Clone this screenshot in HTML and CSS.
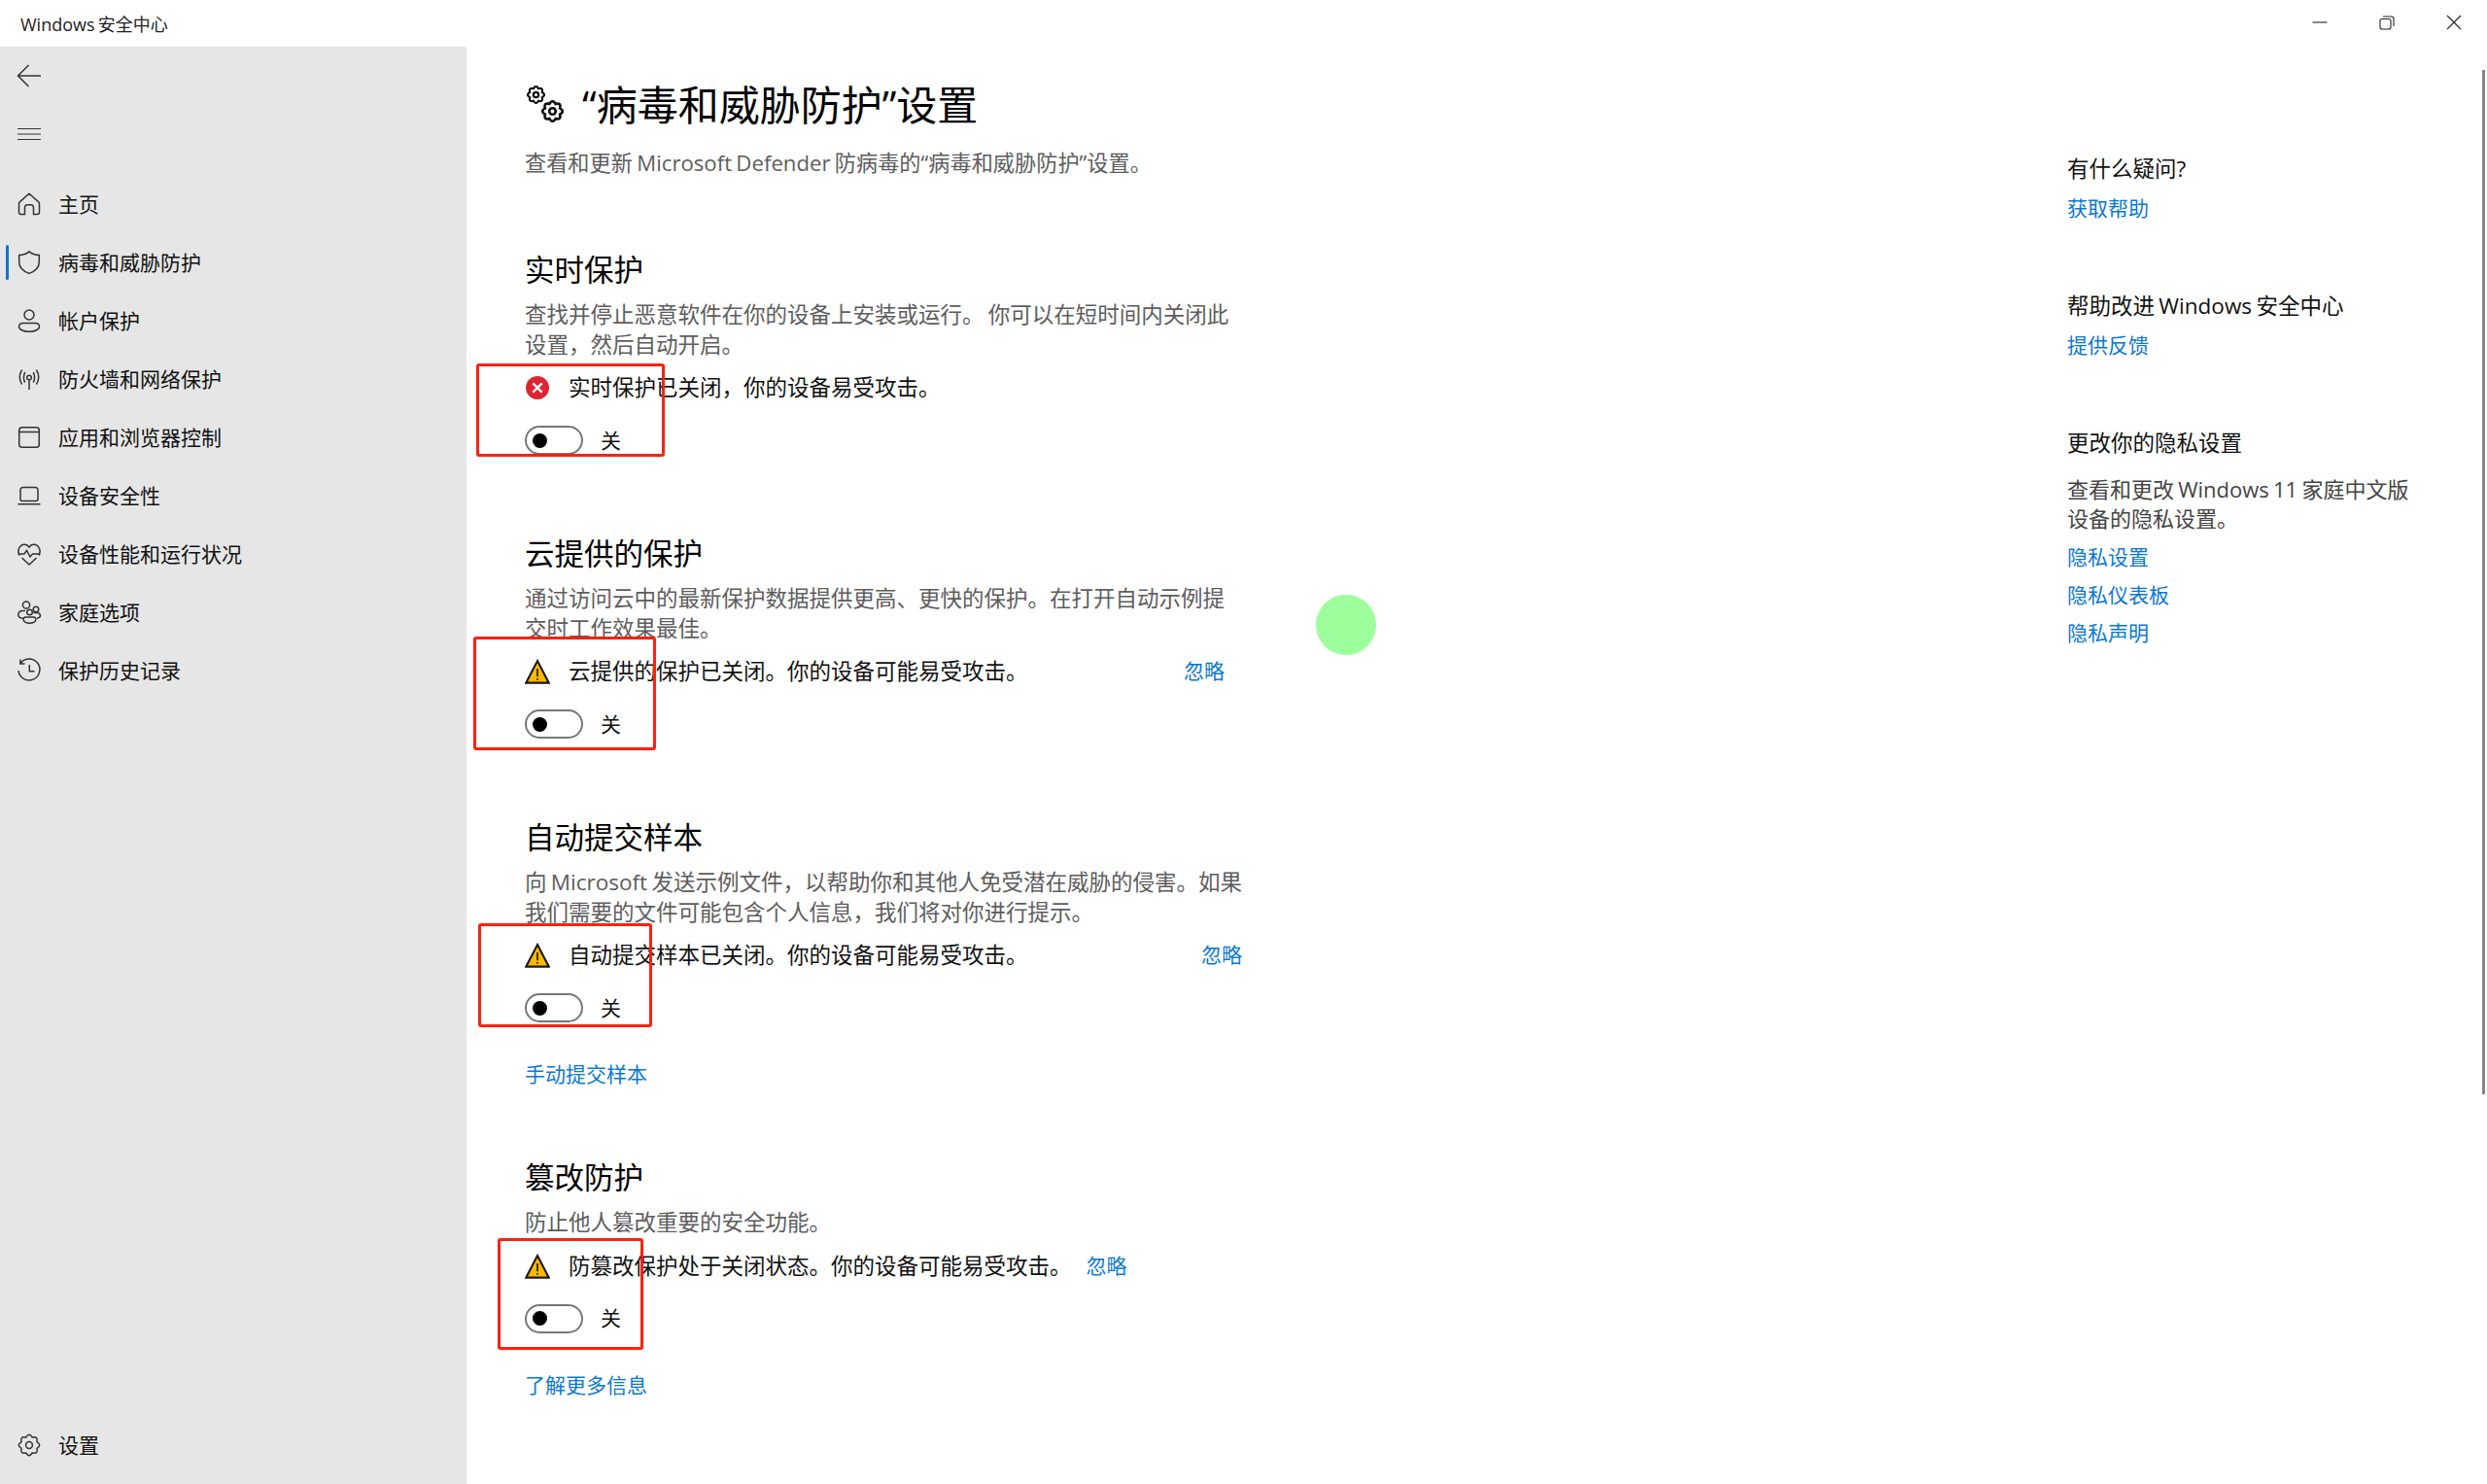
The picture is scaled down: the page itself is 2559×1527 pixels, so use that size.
FILE: index.html
```html
<!DOCTYPE html>
<html lang="zh-CN">

<head>
    <meta charset="UTF-8">
    <meta name="viewport" content="width=device-width, initial-scale=1.0">
    <title>Windows 安全中心</title>
    <link rel="stylesheet" href="styles.css">
</head>

<body>
    <!-- shared icon shapes -->
    <svg class="icon-defs" aria-hidden="true">
        <symbol id="gear" viewBox="0 0 24 24">
            <path d="M19.95 15.29Q21.55 21.55 15.29 19.95Q12 25.5 8.71 19.95Q2.45 21.55 4.05 15.29Q-1.5 12 4.05 8.71Q2.45 2.45 8.71 4.05Q12 -1.5 15.29 4.05Q21.55 2.45 19.95 8.71Q25.5 12 19.95 15.29Z" />
            <circle cx="12" cy="12" r="3.4" />
        </symbol>
        <symbol id="warning" viewBox="0 0 25 25">
            <path class="warning-fill" d="M12.5 2L23.8 23.7H1.2Z" />
            <path class="warning-mark" d="M12.5 9.5V17.5M12.5 19.2V21" />
        </symbol>
    </svg>

    <div class="window">
        <header class="titlebar">
            <span class="app-name">Windows 安全中心</span>
            <div class="window-controls">
                <span class="window-btn">
                    <svg viewBox="0 0 16 16"><path d="M0.5 8H15.5" /></svg>
                </span>
                <span class="window-btn">
                    <svg viewBox="0 0 16 16"><path d="M1 6.5A2 2 0 0 1 3 4.5H10A2 2 0 0 1 12 6.5V13A2 2 0 0 1 10 15H3A2 2 0 0 1 1 13ZM4 2H12.5A2.5 2.5 0 0 1 15 4.5V12" /></svg>
                </span>
                <span class="window-btn">
                    <svg viewBox="0 0 16 16"><path d="M1 1L15 15M15 1L1 15" /></svg>
                </span>
            </div>
        </header>

        <div class="layout">
            <nav class="sidebar">
                <div class="side-tool">
                    <svg class="nav-icon" viewBox="0 0 24 24"><path d="M0.5 12H24M11.5 1L0.5 12L11.5 23" /></svg>
                </div>
                <div class="side-tool">
                    <svg class="nav-icon thin" viewBox="0 0 24 24"><path d="M0 6.5H24M0 12H24M0 17.5H24" /></svg>
                </div>

                <ul class="nav-list">
                    <li class="nav-item">
                        <svg class="nav-icon" viewBox="0 0 24 24"><path d="M12 1.2L21.5 9.6A2 2 0 0 1 22.5 11.5V20.5A2 2 0 0 1 20.5 22.5H16.5V15.5A3 3 0 0 0 13.5 12.8H10.5A3 3 0 0 0 7.5 15.5V22.5H3.5A2 2 0 0 1 1.5 20.5V11.5A2 2 0 0 1 2.5 9.6Z" /></svg>
                        <span>主页</span>
                    </li>
                    <li class="nav-item active">
                        <svg class="nav-icon" viewBox="0 0 24 24"><path d="M12 0.8C15 3.3 18.5 4.4 22.3 4.5V11.5C22.3 17 18.5 21 12 23.4C5.5 21 1.7 17 1.7 11.5V4.5C5.5 4.4 9 3.3 12 0.8Z" /></svg>
                        <span>病毒和威胁防护</span>
                    </li>
                    <li class="nav-item">
                        <svg class="nav-icon" viewBox="0 0 24 24"><circle cx="12" cy="6" r="5" /><path d="M5.5 14.5H18.5A4 4 0 0 1 22.5 18C22.5 21 18 23.2 12 23.2C6 23.2 1.5 21 1.5 18A4 4 0 0 1 5.5 14.5Z" /></svg>
                        <span>帐户保护</span>
                    </li>
                    <li class="nav-item">
                        <svg class="nav-icon" viewBox="0 0 24 24"><circle cx="12" cy="10.5" r="2.3" /><path d="M12 12.8V23M4.6 2.5C1.8 7 1.8 13 4.6 17.5M19.4 2.5C22.2 7 22.2 13 19.4 17.5M7.8 5C6 8 6 13 7.8 15.5M16.2 5C18 8 18 13 16.2 15.5" /></svg>
                        <span>防火墙和网络保护</span>
                    </li>
                    <li class="nav-item">
                        <svg class="nav-icon" viewBox="0 0 24 24"><rect x="1.7" y="1.7" width="20.6" height="20.6" rx="3" /><path d="M1.7 6.5H22.3" /></svg>
                        <span>应用和浏览器控制</span>
                    </li>
                    <li class="nav-item">
                        <svg class="nav-icon" viewBox="0 0 24 24"><path d="M5 17.5A2 2 0 0 1 3 15.5V6A2.5 2.5 0 0 1 5.5 3.5H18.5A2.5 2.5 0 0 1 21 6V15.5A2 2 0 0 1 19 17.5ZM0.5 20.7H23.5" /></svg>
                        <span>设备安全性</span>
                    </li>
                    <li class="nav-item">
                        <svg class="nav-icon" viewBox="0 0 24 24"><path d="M2.2 13.5C-1 8 2.5 2 7.5 2.3C9.5 2.4 11 3.5 12 5C13 3.5 14.5 2.4 16.5 2.3C21.5 2 25 8 21.8 13.5M0.5 12H7L9.5 8.5L13 15L15.5 12H23.5M4.5 16L12 23L19.5 16" /></svg>
                        <span>设备性能和运行状况</span>
                    </li>
                    <li class="nav-item">
                        <svg class="nav-icon" viewBox="0 0 24 24"><circle cx="9" cy="4.5" r="3.6" /><circle cx="19" cy="9" r="2.8" /><circle cx="12.5" cy="12" r="2.8" /><path d="M8 10.5H5A4 4 0 0 0 0.8 14.5C0.8 16.5 2.5 18 5.5 18.3M16.5 12.5H20A3.5 3.5 0 0 1 23.5 15.5C23.5 17 22 18 20 18.3M8.5 17H16.5A2.5 2.5 0 0 1 19 19.3C19 21.5 16 23.3 12.5 23.3C9 23.3 6 21.5 6 19.3A2.5 2.5 0 0 1 8.5 17Z" /></svg>
                        <span>家庭选项</span>
                    </li>
                    <li class="nav-item">
                        <svg class="nav-icon" viewBox="0 0 24 24"><path d="M3.2 4.2A11 11 0 1 1 1 12M2.8 0.5V5H7.5M12.3 6V12.8H17.5" /></svg>
                        <span>保护历史记录</span>
                    </li>
                </ul>

                <div class="nav-item nav-bottom">
                    <svg class="nav-icon gear-icon"><use href="#gear" /></svg>
                    <span>设置</span>
                </div>
            </nav>

            <main class="content">
                <div class="settings">
                    <h1 class="page-title">
                        <svg class="title-icon" viewBox="0 0 40 40">
                            <use href="#gear" x="2" y="0" width="19" height="19" />
                            <use href="#gear" x="17" y="15" width="23" height="23" />
                        </svg>
                        <span>“病毒和威胁防护”设置</span>
                    </h1>
                    <p class="page-intro">查看和更新 Microsoft Defender 防病毒的“病毒和威胁防护”设置。</p>

                    <section class="setting first">
                        <h2>实时保护</h2>
                        <p class="desc">查找并停止恶意软件在你的设备上安装或运行。 你可以在短时间内关闭此<br>设置，然后自动开启。</p>
                        <div class="alert">
                            <svg class="alert-icon" viewBox="0 0 25 25">
                                <circle class="error-disc" cx="12.5" cy="12.5" r="11.5" />
                                <path class="error-cross" d="M8 8L17 17M17 8L8 17" />
                            </svg>
                            <span class="alert-text">实时保护已关闭，你的设备易受攻击。</span>
                        </div>
                        <div class="switch-row"><span class="switch"></span><span class="switch-label">关</span></div>
                    </section>

                    <section class="setting">
                        <h2>云提供的保护</h2>
                        <p class="desc">通过访问云中的最新保护数据提供更高、更快的保护。在打开自动示例提<br>交时工作效果最佳。</p>
                        <div class="alert">
                            <svg class="alert-icon"><use href="#warning" /></svg>
                            <span class="alert-text">云提供的保护已关闭。你的设备可能易受攻击。</span>
                            <a class="link dismiss" href="#">忽略</a>
                        </div>
                        <div class="switch-row"><span class="switch"></span><span class="switch-label">关</span></div>
                    </section>

                    <section class="setting">
                        <h2>自动提交样本</h2>
                        <p class="desc">向 Microsoft 发送示例文件，以帮助你和其他人免受潜在威胁的侵害。如果<br>我们需要的文件可能包含个人信息，我们将对你进行提示。</p>
                        <div class="alert">
                            <svg class="alert-icon"><use href="#warning" /></svg>
                            <span class="alert-text">自动提交样本已关闭。你的设备可能易受攻击。</span>
                            <a class="link dismiss" href="#">忽略</a>
                        </div>
                        <div class="switch-row"><span class="switch"></span><span class="switch-label">关</span></div>
                        <a class="link more" href="#">手动提交样本</a>
                    </section>

                    <section class="setting">
                        <h2>篡改防护</h2>
                        <p class="desc">防止他人篡改重要的安全功能。</p>
                        <div class="alert">
                            <svg class="alert-icon"><use href="#warning" /></svg>
                            <span class="alert-text">防篡改保护处于关闭状态。你的设备可能易受攻击。</span>
                            <a class="link dismiss" href="#">忽略</a>
                        </div>
                        <div class="switch-row"><span class="switch"></span><span class="switch-label">关</span></div>
                        <a class="link more" href="#">了解更多信息</a>
                    </section>
                </div>

                <aside class="help">
                    <h3>有什么疑问?</h3>
                    <a class="link" href="#">获取帮助</a>
                    <h3>帮助改进 Windows 安全中心</h3>
                    <a class="link" href="#">提供反馈</a>
                    <h3>更改你的隐私设置</h3>
                    <p class="help-text">查看和更改 Windows 11 家庭中文版<br>设备的隐私设置。</p>
                    <a class="link" href="#">隐私设置</a>
                    <a class="link" href="#">隐私仪表板</a>
                    <a class="link" href="#">隐私声明</a>
                </aside>
            </main>
        </div>

        <!-- things lying over the app: scrollbar, cursor spot, red annotation boxes -->
        <div class="scroll-thumb"></div>
        <div class="cursor-spot"></div>
        <div class="mark mark-realtime"></div>
        <div class="mark mark-cloud"></div>
        <div class="mark mark-sample"></div>
        <div class="mark mark-tamper"></div>
    </div>
</body>

</html>
```

FILE: styles.css
```css
:root {
    --sidebar-bg: #e6e6e6;
    --text-main: #111111;
    --text-muted: #5d5d5d;
    --link: #0a78d2;
    --icon-line: #333333;
}

html,
body {
    margin: 0;
    height: 100%;
}

body {
    font-family: "Open Sans", "Noto Sans CJK SC", sans-serif;
    color: var(--text-main);
    background-color: #ffffff;
    overflow: hidden;
    word-spacing: -1.5px;
}

.icon-defs {
    display: none;
}

.window {
    position: relative;
    display: flex;
    flex-direction: column;
    height: 100vh;
}

/* Title bar */
.titlebar {
    display: flex;
    align-items: center;
    justify-content: space-between;
    flex: 0 0 48px;
    padding-left: 21px;
}

.app-name {
    font-size: 18px;
    color: #222222;
}

.window-controls {
    display: flex;
    align-items: center;
    margin-bottom: 2px;
}

.window-btn {
    display: flex;
    align-items: center;
    justify-content: center;
    width: 69px;
}

.window-btn svg {
    width: 16px;
    height: 16px;
    fill: none;
    stroke: #222222;
    stroke-width: 1.1;
}

.layout {
    display: flex;
    flex: 1;
    min-height: 0;
}

/* Sidebar */
.sidebar {
    display: flex;
    flex-direction: column;
    flex: 0 0 480px;
    background-color: var(--sidebar-bg);
    font-size: 21px;
}

.side-tool {
    display: flex;
    align-items: center;
    height: 60px;
    padding-left: 18px;
}

.nav-icon {
    flex: 0 0 24px;
    width: 24px;
    height: 24px;
    fill: none;
    stroke: var(--icon-line);
    stroke-width: 1.5;
    overflow: visible;
}

.nav-icon.thin {
    stroke-width: 1.1;
}

.nav-list {
    list-style: none;
    margin: 12px 0 0;
    padding: 0;
}

.nav-item {
    position: relative;
    display: flex;
    align-items: center;
    gap: 18px;
    height: 60px;
    padding-left: 18px;
    line-height: 30px;
}

.nav-item.active::before {
    content: "";
    position: absolute;
    left: 6px;
    top: 12px;
    width: 3px;
    height: 36px;
    border-radius: 2px;
    background-color: #0078d7;
}

.nav-bottom {
    margin-top: auto;
    margin-bottom: 10px;
}

/* Main column */
.content {
    display: flex;
    flex: 1;
    padding: 32px 0 0 60px;
}

.settings {
    flex: 0 0 1587px;
}

.page-title {
    display: flex;
    align-items: center;
    gap: 19px;
    margin: 0;
    height: 56px;
    font-size: 42px;
    font-weight: 400;
    line-height: 56px;
    color: #000000;
}

.title-icon {
    width: 40px;
    height: 40px;
    fill: none;
    stroke: #111111;
    stroke-width: 2.8;
    overflow: visible;
}

.page-intro {
    margin: 17px 0 0;
    font-size: 22.2px;
    line-height: 30px;
    color: var(--text-muted);
}

.setting {
    width: fit-content;
    margin-top: 81px;
}

.setting.first {
    margin-top: 74px;
}

.setting h2 {
    margin: 0;
    font-size: 30.5px;
    font-weight: 400;
    line-height: 40px;
    color: #000000;
}

.desc {
    margin: 12px 0 0;
    font-size: 22.5px;
    line-height: 30.5px;
    color: var(--text-muted);
}

.alert {
    display: flex;
    align-items: center;
    justify-content: space-between;
    gap: 15px;
    margin-top: 14px;
    height: 30px;
    font-size: 22.5px;
    line-height: 30px;
}

.alert-icon {
    flex: 0 0 26px;
    width: 26px;
    height: 26px;
    margin-right: 4px;
}

.alert-text {
    flex: 1;
    color: #111111;
}

.error-disc {
    fill: #dc2433;
}

.error-cross {
    fill: none;
    stroke: #ffffff;
    stroke-width: 2.2;
}

.warning-fill {
    fill: #ffb900;
    stroke: #1a1a1a;
    stroke-width: 2;
    stroke-linejoin: miter;
}

.warning-mark {
    fill: none;
    stroke: #1a1a1a;
    stroke-width: 1.6;
}

.switch-row {
    display: flex;
    align-items: center;
    gap: 18px;
    margin-top: 24px;
    height: 30px;
    font-size: 21px;
}

.switch-label {
    padding-bottom: 3px;
}

.switch {
    position: relative;
    box-sizing: border-box;
    width: 60px;
    height: 30px;
    border: 2px solid #777777;
    border-radius: 15px;
}

.switch::after {
    content: "";
    position: absolute;
    left: 6px;
    top: 5.5px;
    width: 15px;
    height: 15px;
    border-radius: 50%;
    background-color: #000000;
}

.link {
    display: block;
    font-size: 21px;
    line-height: 30px;
    color: var(--link);
    text-decoration: none;
}

.dismiss {
    flex: 0 0 auto;
    margin-top: -2px;
}

.more {
    margin-top: 29px;
    line-height: 48px;
    margin-bottom: -19px;
}

/* Right help column */
.help {
    flex: 0 0 300px;
    padding-top: 79px;
}

.help h3 {
    margin: 71px 0 0;
    font-size: 22.5px;
    font-weight: 400;
    line-height: 30px;
    color: #111111;
}

.help h3:first-child {
    margin-top: 0;
}

.help h3 + .link {
    margin-top: 10px;
}

.help-text {
    margin: 17px 0 0;
    font-size: 22px;
    line-height: 30px;
    color: #444444;
    white-space: nowrap;
}

.help .help-text + .link {
    margin-top: 10px;
}

.help .link + .link {
    margin-top: 9px;
}

/* Overlays */
.scroll-thumb {
    position: absolute;
    right: 2px;
    top: 72px;
    width: 3px;
    height: 1054px;
    background-color: #858585;
}

.cursor-spot {
    position: absolute;
    left: 1354px;
    top: 612px;
    width: 62px;
    height: 62px;
    border-radius: 50%;
    background-color: #9cff9c;
}

.mark {
    position: absolute;
    box-sizing: border-box;
    border: 3px solid #ff2010;
    border-radius: 3px;
}

.mark-realtime {
    left: 490px;
    top: 374px;
    width: 194px;
    height: 96px;
}

.mark-cloud {
    left: 487px;
    top: 655px;
    width: 188px;
    height: 117px;
}

.mark-sample {
    left: 492px;
    top: 950px;
    width: 179px;
    height: 107px;
}

.mark-tamper {
    left: 512px;
    top: 1274px;
    width: 150px;
    height: 115px;
}
```
